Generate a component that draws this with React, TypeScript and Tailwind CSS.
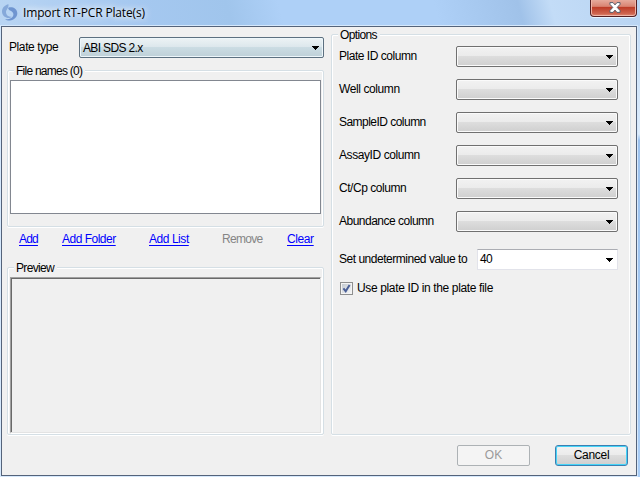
import type { ReactNode } from "react";

const columns = [
  { name: "Plate ID column", tracking: "tracking-[-0.47px]" },
  { name: "Well column", tracking: "tracking-[-0.4px]" },
  { name: "SampleID column", tracking: "tracking-[-0.53px]" },
  { name: "AssayID column", tracking: "tracking-[-0.42px]" },
  { name: "Ct/Cp column", tracking: "tracking-[-0.45px]" },
  { name: "Abundance column", tracking: "tracking-[-0.5px]" },
];

function Arrow() {
  return (
    <svg width="7" height="4" viewBox="0 0 7 4" shapeRendering="crispEdges" className="shrink-0">
      <path d="M0 0h7v1H6v1H5v1H4v1H3V3H2V2H1V1H0z" fill="#000" />
    </svg>
  );
}

function Group({ title, tracking, className, children }: { title: string; tracking: string; className: string; children?: ReactNode }) {
  return (
    <section className={`relative rounded-[2px] border border-[#d5dfe5] shadow-[inset_1px_1px_0_#fff,inset_-1px_0_0_#fff,0_1px_0_#fff] ${className}`}>
      <h2 className={`absolute left-[6px] top-[-7px] h-[14px] whitespace-nowrap bg-[#f0f0f0] pl-[2px] pr-[3px] leading-[14px] ${tracking}`}>{title}</h2>
      {children}
    </section>
  );
}

function Combo() {
  return (
    <button className="flex h-[21px] w-[162px] items-center justify-end rounded-[2px] border border-[#707070] bg-[linear-gradient(#f2f2f2_0%,#ebebeb_48%,#dddddd_50%,#cfcfcf_100%)] pr-[4px] pt-px shadow-[inset_0_0_0_1px_#fafafa]">
      <Arrow />
    </button>
  );
}

export default function App() {
  return (
    <main className="h-[477px] w-[640px] overflow-hidden bg-[#b9d5f3] font-['Liberation_Sans',Arial,sans-serif] text-[12px] text-black">
      <header className="flex h-[26px] items-start justify-between bg-[linear-gradient(75deg,#b9d5f3_0%,#a5c8f0_22%,#a0c5ec_36%,#aed0f7_44%,#aed0f7_68%,#a0c2e9_81%,#c3dcf7_86%,#b8d4f2_100%)] pr-[3px]">
        <div className="flex h-[25px] items-center">
          <svg width="16" height="17" viewBox="0 0 16 17" className="ml-[2px]">
            <path d="M6.5.3C2.8 1 0 4 0 7.6c0 3.300 2.300 5.800 5.400 6.400 1.800.3 3.300-.1 4.200-1.200-2.800.2-5.400-1.300-5.600-4.300C3.800 5.500 6.800 4.600 6.500.3z" fill="#86a9da" />
            <path d="M6.300 3.800c3.500-1.500 8.700.5 9 5.200.2 3.800-3.300 7.300-7.400 7.500-2 .1-3.700-.4-4.900-1.300 4.300.4 8-1 8.400-4.400.3-2.500-2-3.700-3.400-4.300-1.200-.6-1.900-1.400-1.700-2.700z" fill="#6f95d0" />
          </svg>
          <h1 className="ml-[5px] whitespace-nowrap font-['Open_Sans','Noto_Sans',sans-serif] text-[12px] tracking-[-0.15px] [text-shadow:0_0_6px_#fff,0_0_9px_#fff]">Import RT-PCR Plate(s)</h1>
        </div>
        <button aria-label="Close" className="flex h-[17px] w-[47px] items-center justify-center rounded-b-[4px] border border-t-0 border-[#541f22] bg-[linear-gradient(#e6aa9c_0%,#d98472_40%,#bd3b26_45%,#ce6550_85%,#e58e76_100%)] pb-[2px] pl-[2px] shadow-[inset_0_-1px_0_#efb5a8,inset_1px_0_0_#efb5a8,inset_-1px_0_0_#efb5a8,0_1px_0_#e9f4ff]">
          <svg width="12" height="11" viewBox="0 0 13 11" preserveAspectRatio="none">
            <path d="M1 .6h3.4l2.1 2.3L8.6.6H12v1.7L8.900 5.400 12 8.600v1.800H8.600L6.500 8.100l-2.100 2.300H1V8.600l3.100-3.200L1 2.300z" fill="#fff" stroke="#525968" strokeWidth="1" />
          </svg>
        </button>
      </header>

      <div className="bg-[linear-gradient(#c3dcf6_0px,#dcecfc_108px,#9dc3ef_114px,#a9cdf6_100%)] pb-px pl-px">
        <div className="flex h-[450px] w-[636px] flex-col border border-[#54637a] bg-[#f0f0f0] shadow-[0_0_0_1px_#d5e8fc]">
          <div className="flex h-[409px] pl-[5px]">
            <div className="w-[324px]">
              <div className="flex h-[41px] items-center">
                <span className="w-[72px] whitespace-nowrap pb-[2px] pl-[2px] tracking-[-0.4px]">Plate type</span>
                <button className="flex h-[21px] w-[245px] items-center justify-between rounded-[2px] border border-[#5c7080] bg-[linear-gradient(#edf3f5_0%,#dce7ec_48%,#cbdce3_50%,#bed0d8_100%)] pl-[3px] pr-[4px] shadow-[inset_0_0_0_1px_#edf6fa]">
                  <span className="tracking-[-0.65px]">ABI SDS 2.x</span>
                  <Arrow />
                </button>
              </div>
              <Group title="File names (0)" tracking="tracking-[-0.75px]" className="mt-[2px] h-[157px] w-[317px] pl-[2px] pt-[9px]">
                <div className="h-[134px] w-[311px] border border-[#828790] bg-white" />
              </Group>
              <nav className="flex h-[24px] items-center pl-[12px] text-[#0000ff]">
                <span className="w-[43px] whitespace-nowrap"><a className="tracking-[-0.8px] underline underline-offset-2">Add</a></span>
                <span className="w-[87px] whitespace-nowrap"><a className="tracking-[-0.5px] underline underline-offset-2">Add Folder</a></span>
                <span className="w-[73px] whitespace-nowrap"><a className="tracking-[-0.45px] underline underline-offset-2">Add List</a></span>
                <span className="w-[65px] whitespace-nowrap tracking-[-0.7px] text-[#858585]">Remove</span>
                <a className="whitespace-nowrap tracking-[-0.4px] underline underline-offset-2">Clear</a>
              </nav>
              <Group title="Preview" tracking="tracking-[-0.65px]" className="mt-[16px] h-[168px] w-[317px] pl-[2px] pt-[9px]">
                <div className="h-[156px] w-[311px] border border-b-[#e3e3e3] border-l-[#a0a0a0] border-r-[#e3e3e3] border-t-[#a0a0a0] shadow-[inset_1px_1px_0_#696969,1px_1px_0_#fff]" />
              </Group>
            </div>

            <Group title="Options" tracking="tracking-[-0.65px]" className="mt-[7px] h-[401px] w-[300px] pl-[7px] pt-[11px]">
              <div className="flex flex-col gap-[12px]">
                {columns.map((column) => (
                  <div key={column.name} className="flex h-[21px] items-center">
                    <span className={`w-[117px] whitespace-nowrap pb-[2px] ${column.tracking}`}>{column.name}</span>
                    <Combo />
                  </div>
                ))}
              </div>
              <div className="mt-[17px] flex h-[21px] items-center">
                <span className="w-[138px] whitespace-nowrap pb-[2px] tracking-[-0.48px]">Set undetermined value to</span>
                <div className="flex h-[21px] w-[141px] items-center justify-between border border-[#e2e3ea] border-t-[#abadb3] bg-white pl-[2px] pr-[4px]">
                  <span className="pb-[2px] tracking-[-0.6px]">40</span>
                  <Arrow />
                </div>
              </div>
              <label className="mt-[10px] flex h-[16px] items-center pl-[1px]">
                <span className="flex h-[13px] w-[13px] items-center justify-center border border-[#8e8f8f] bg-[#f4f4f4]">
                  <span className="flex h-[9px] w-[9px] items-center justify-center bg-[linear-gradient(135deg,#c4cad1,#f4f5f6)]">
                    <svg width="9" height="9" viewBox="0 0 9 9">
                      <path d="M1.4 4.4 3.7 7.2 7.6 1" fill="none" stroke="#4a5f97" strokeWidth="2" />
                    </svg>
                  </span>
                </span>
                <span className="ml-[4px] whitespace-nowrap tracking-[-0.36px]">Use plate ID in the plate file</span>
              </label>
            </Group>
          </div>

          <footer className="mt-[9px] flex gap-[25px] pl-[455px]">
            <button className="h-[21px] w-[73px] rounded-[2px] border border-[#adb2b5] bg-[#f4f4f4] pb-px leading-[17px] text-[#9a9a9a]">OK</button>
            <button className="h-[21px] w-[73px] rounded-[3px] border border-[#3c7fb1] bg-[linear-gradient(#f2f2f2_0%,#ebebeb_48%,#dddddd_50%,#cfcfcf_100%)] pb-px leading-[17px] tracking-[-0.3px] shadow-[inset_0_0_0_1px_#45d4f8]">Cancel</button>
          </footer>
        </div>
      </div>
    </main>
  );
}
